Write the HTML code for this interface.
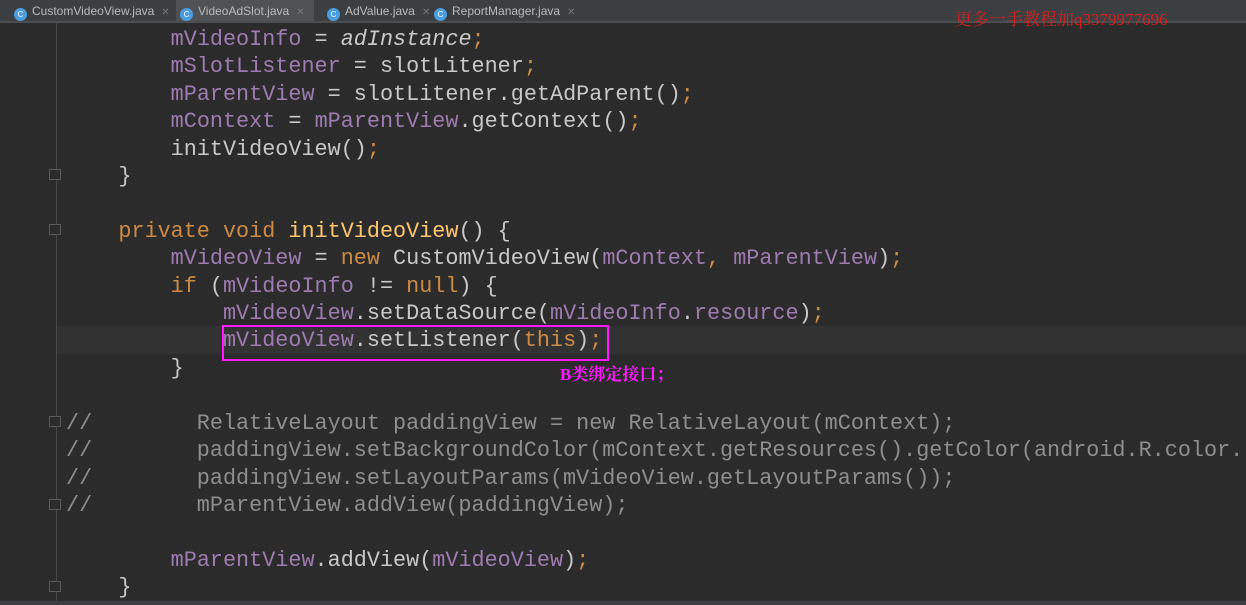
<!DOCTYPE html>
<html><head><meta charset="utf-8"><style>
body{margin:0;width:1246px;height:605px;overflow:hidden;background:#2b2b2b;position:relative;font-family:"Liberation Sans",sans-serif}
.tabs{position:absolute;left:0;top:0;width:1246px;height:21px;background:#3c3f41;border-bottom:2px solid #4b4e50}
.tab{position:absolute;top:0;height:21px;font-size:12px;color:#bbbbbb;line-height:22px;padding-left:4px;white-space:nowrap;overflow:hidden}
.tab .ic{display:inline-block;width:13px;height:13px;border-radius:50%;background:#4a9ee0;color:#fff;font-size:8px;line-height:13px;text-align:center;vertical-align:-2px;margin-right:5px}
.tab .x{color:#777;margin-left:7px;font-size:10px}
.act{background:#4e5254}
.gut{position:absolute;left:56px;top:23px;width:1px;height:582px;background:#484848}
.code{position:absolute;left:66px;top:26px;font-family:"Liberation Mono",monospace;font-size:21.8px;line-height:27.4px;white-space:pre;color:#c8c8c8}
.f{color:#9e7bb0}.k{color:#cc8a45}.m{color:#ffc66d}.c{color:#8e8e8e}
.cur{position:absolute;left:57px;top:326px;width:1189px;height:28px;background:#323232}
.box{position:absolute;left:222px;top:325px;width:383px;height:32px;border:2px solid #ff1aff}
.lbl{position:absolute;left:560px;top:360px;color:#ff1aff;font:bold 17px "Liberation Serif","Noto Serif CJK SC",serif}
.wm{position:absolute;left:955px;top:5px;color:#d62020;font:17px "Liberation Serif","Noto Serif CJK SC",serif}
.fold{position:absolute;left:49px;width:12px;height:11px;border:1px solid #5a5a5a;background:#2b2b2b;box-sizing:border-box}
.bot{position:absolute;left:0;top:601px;width:1246px;height:4px;background:#3c3f41}
</style></head><body>
<div class="tabs">
<div class="tab" style="left:10px;width:160px"><span class="ic">C</span>CustomVideoView.java<span class="x">✕</span></div>
<div class="tab act" style="left:176px;width:134px"><span class="ic">C</span>VideoAdSlot.java<span class="x">✕</span></div>
<div class="tab" style="left:323px;width:104px"><span class="ic">C</span>AdValue.java<span class="x">✕</span></div>
<div class="tab" style="left:430px;width:160px"><span class="ic">C</span>ReportManager.java<span class="x">✕</span></div>
</div>
<div class="wm">更多一手教程加q3379977696</div>
<div class="cur"></div>
<div class="gut"></div>
<div class="fold" style="top:169px"></div>
<div class="fold" style="top:224px"></div>
<div class="fold" style="top:416px"></div>
<div class="fold" style="top:499px"></div>
<div class="fold" style="top:581px"></div>
<div class="code">        <span class="f">mVideoInfo</span> = <span style="font-style:italic">adInstance</span><span class="k">;</span>
        <span class="f">mSlotListener</span> = slotLitener<span class="k">;</span>
        <span class="f">mParentView</span> = slotLitener.getAdParent()<span class="k">;</span>
        <span class="f">mContext</span> = <span class="f">mParentView</span>.getContext()<span class="k">;</span>
        initVideoView()<span class="k">;</span>
    }

    <span class="k">private void</span> <span class="m">initVideoView</span>() {
        <span class="f">mVideoView</span> = <span class="k">new</span> CustomVideoView(<span class="f">mContext</span><span class="k">,</span> <span class="f">mParentView</span>)<span class="k">;</span>
        <span class="k">if</span> (<span class="f">mVideoInfo</span> != <span class="k">null</span>) {
            <span class="f">mVideoView</span>.setDataSource(<span class="f">mVideoInfo</span>.<span class="f">resource</span>)<span class="k">;</span>
            <span class="f">mVideoView</span>.setListener(<span class="k">this</span>)<span class="k">;</span>
        }

<span class="c">//        RelativeLayout paddingView = new RelativeLayout(mContext);
//        paddingView.setBackgroundColor(mContext.getResources().getColor(android.R.color.
//        paddingView.setLayoutParams(mVideoView.getLayoutParams());
//        mParentView.addView(paddingView);</span>

        <span class="f">mParentView</span>.addView(<span class="f">mVideoView</span>)<span class="k">;</span>
    }</div>
<div class="box"></div>
<div class="lbl">B类绑定接口；</div>
<div class="bot"></div>
</body></html>
